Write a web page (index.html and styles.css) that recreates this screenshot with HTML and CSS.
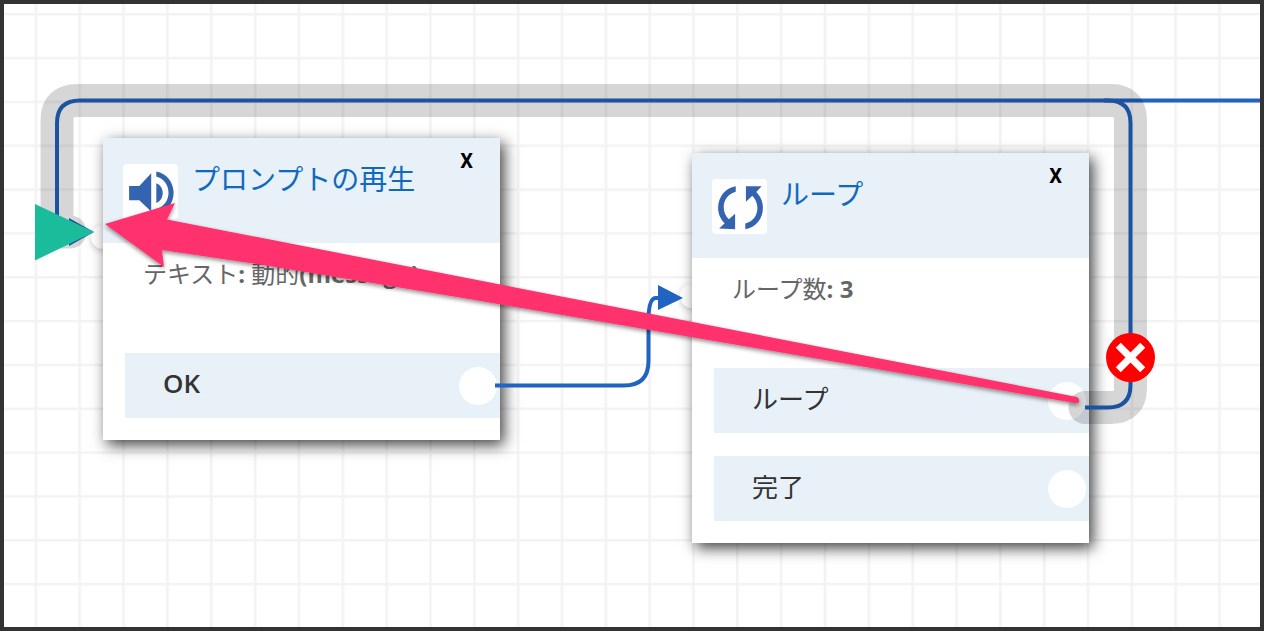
FILE: index.html
```html
<!DOCTYPE html>
<html lang="ja">
<head>
<meta charset="utf-8">
<title>プロンプトの再生 / ループ</title>
<link rel="stylesheet" href="styles.css">
</head>
<body>
<main class="canvas">
  <svg class="layer" aria-hidden="true">
    <defs>
      <pattern id="grid" x="30.6" y="9" width="43.84" height="43.84" patternUnits="userSpaceOnUse">
        <path class="grid-line" d="M0 1.3H43.84M1.3 0V43.84"/>
      </pattern>
    </defs>
    <rect width="100%" height="100%" fill="url(#grid)"/>
  </svg>

  <section class="node node-prompt">
    <span class="inlet"></span>
    <div class="card">
      <header class="head">
        <svg class="icon" viewBox="0 0 54 54" aria-hidden="true">
          <path d="M6 21.7H16L27.7 9V46.7L16 35.7H6ZM32.7 19C37 20.5 39 24.5 39 28.5S37 36.8 32.7 38.3ZM32.7 7.3C43 9.2 49.7 18 49.7 28.3S43 47.5 32.7 49.5V44.3C40 42.3 44.7 36 44.7 28.3S40 14.3 32.7 12.3Z"/>
        </svg>
        <h2 class="title">プロンプトの再生</h2>
        <button class="close" type="button" aria-label="閉じる">X</button>
      </header>
      <p class="detail">テキスト<b>: </b>動的<b>(message)</b></p>
      <div class="outlets">
        <div class="outlet"><span class="label"><b>OK</b></span><span class="port"></span></div>
      </div>
    </div>
  </section>

  <section class="node node-loop">
    <span class="inlet"></span>
    <div class="card">
      <header class="head">
        <svg class="icon" viewBox="0 0 54 54" aria-hidden="true">
          <path d="M23.3 7V12.5C16 14.3 11.5 20.5 11.5 27.5C11.5 32 13 36 16.5 39.5L22.7 34V49.3L7 48.7L12.5 43.5C8.3 39.5 6 34 6 28.3C6 17.5 13 8.7 23.3 7ZM33.3 7H48.7L43.5 12.8C47.7 17 50 22.5 50 28.3C50 39 43 47.8 32.7 49.3V43.7C40 42 44.6 35.8 44.6 28.5C44.6 24 42.8 20 39.6 16.5L33.3 22.3Z"/>
        </svg>
        <h2 class="title">ループ</h2>
        <button class="close" type="button" aria-label="閉じる">X</button>
      </header>
      <p class="detail">ループ数<b>: 3</b></p>
      <div class="outlets">
        <div class="outlet"><span class="label">ループ</span><span class="port"></span></div>
        <div class="outlet"><span class="label">完了</span><span class="port"></span></div>
      </div>
    </div>
  </section>

  <svg class="layer" aria-hidden="true">
    <defs>
      <filter id="soft" x="-5%" y="-10%" width="110%" height="125%">
        <feDropShadow dx="0" dy="2" stdDeviation="2" flood-color="#000" flood-opacity=".45"/>
      </filter>
    </defs>
    <line class="wire" x1="1100" y1="96.5" x2="100%" y2="96.5"/>
    <path class="wire" d="M491 381.5H620Q644.5 381.5 644.5 357V314Q645 294 652 294H655"/>
    <path class="head-blue" d="M654 281L679 294L654 306Z"/>
    <path class="wire" d="M1081 403.5H1104Q1126.5 403.5 1126.5 381V119Q1126.5 96.5 1104 96.5H76Q53 96.5 53 119V228H66"/>
    <path class="head-blue" d="M65 214L90 228L65 242Z"/>
    <path class="halo" d="M1081 403.5H1107Q1126.5 403.5 1126.5 384V116Q1126.5 96.5 1107 96.5H73Q53 96.5 53 116V228H66"/>
    <path class="head-green" d="M31 200L90 228L31 256.5Z"/>
    <path class="pointer" filter="url(#soft)" d="M101 220L171 199L163 215.5L1073 393Q1076 395 1075 398Q1074 400 1071 399L456 293.5L256 260.5L158 246L160 263Z"/>
  </svg>

  <button class="remove" type="button" aria-label="接続を削除">
    <svg viewBox="0 0 48 48" aria-hidden="true"><path d="M12 12L36 36M36 12L12 36"/></svg>
  </button>
</main>
</body>
</html>
```
FILE: styles.css
```css
* { box-sizing: border-box; }

body {
  margin: 0;
  font-family: "Open Sans", "Noto Sans CJK JP", sans-serif;
  color: #333;
}

.canvas {
  position: relative;
  min-height: 100vh;
  overflow: hidden;
  border: 4px solid #333;
  background: #fff;
}

.layer {
  position: absolute;
  inset: 0;
  width: 100%;
  height: 100%;
  pointer-events: none;
}

.grid-line { fill: none; stroke: #f3f3f3; stroke-width: 2.5; }

.node { position: absolute; width: 397px; }
.node-prompt { left: 99px; top: 134px; }
.node-loop { left: 688px; top: 149px; }

.inlet {
  position: absolute;
  left: -12px;
  top: 87px;
  width: 24px;
  height: 24px;
  border-radius: 50%;
  background: #fff;
  box-shadow: 0 2px 6px rgba(0, 0, 0, .2);
}
.node-loop .inlet { top: 131px; }

.card {
  position: relative;
  padding-bottom: 22px;
  background: #fff;
  box-shadow: 4px 5px 14px rgba(0, 0, 0, .75);
}

.head {
  display: flex;
  align-items: flex-start;
  gap: 14px;
  height: 105px;
  padding: 21px 27px 0 20px;
  background: #e8f0f8;
}

.icon {
  width: 55px;
  height: 55px;
  margin-top: 5px;
  border-radius: 4px;
  background: #fff;
  fill: #3464b0;
}

.title {
  flex: 1;
  margin: 0;
  font-size: 28px;
  font-weight: 400;
  line-height: 40px;
  color: #0f69be;
}

.close {
  border: 0;
  padding: 0;
  background: none;
  font-family: Roboto, sans-serif;
  font-size: 20px;
  font-weight: 700;
  line-height: 4px;
  color: #000;
}

.detail {
  height: 110px;
  margin: 0;
  padding: 13px 40px 0;
  font-size: 24px;
  line-height: 36px;
  color: #666;
}

.outlets {
  display: grid;
  gap: 23px;
  padding-left: 22px;
}

.outlet {
  display: flex;
  align-items: center;
  justify-content: space-between;
  height: 65px;
  padding: 0 3px 0 38px;
  background: #e8f0f8;
  font-size: 26px;
}
.outlet b { font-weight: 600; }
.label { padding-bottom: 5px; }

.port {
  width: 38px;
  height: 38px;
  border-radius: 50%;
  background: #fff;
}

.wire { fill: none; stroke: #2063c0; stroke-width: 4; }
.halo {
  fill: none;
  stroke: #000;
  stroke-opacity: .16;
  stroke-width: 33;
  stroke-linecap: round;
}
.head-blue { fill: #2063c0; }
.head-green { fill: #1abc9c; }
.pointer { fill: #ff306e; }

.remove {
  position: absolute;
  left: 1102px;
  top: 329px;
  width: 49px;
  height: 49px;
  padding: 0;
  border: 0;
  border-radius: 50%;
  background: #f00;
}
.remove svg {
  display: block;
  fill: none;
  stroke: #fff;
  stroke-width: 7;
}
```
